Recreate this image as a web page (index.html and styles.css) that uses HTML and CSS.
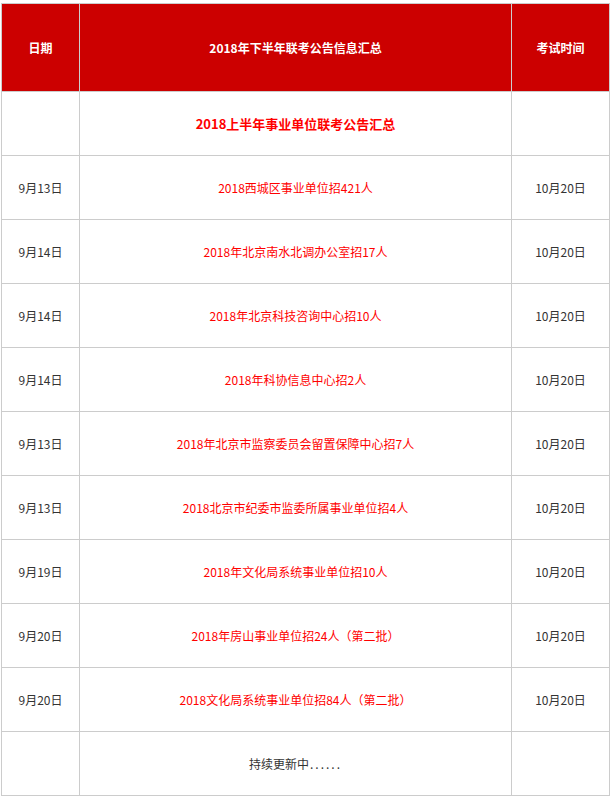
FILE: index.html
```html
<!DOCTYPE html>
<html lang="zh">
<head>
<meta charset="utf-8">
<link rel="stylesheet" href="styles.css">
</head>
<body>
<div class="wrap">
<table class="tbl">
  <colgroup>
    <col class="c1"><col class="c2"><col class="c3">
  </colgroup>
  <thead>
    <tr class="head">
      <th>日期</th>
      <th>2018年下半年联考公告信息汇总</th>
      <th>考试时间</th>
    </tr>
  </thead>
  <tbody>
    <tr class="row">
      <td></td>
      <td class="sub">2018上半年事业单位联考公告汇总</td>
      <td></td>
    </tr>
    <tr class="row"><td>9月13日</td><td class="link">2018西城区事业单位招421人</td><td>10月20日</td></tr>
    <tr class="row"><td>9月14日</td><td class="link">2018年北京南水北调办公室招17人</td><td>10月20日</td></tr>
    <tr class="row"><td>9月14日</td><td class="link">2018年北京科技咨询中心招10人</td><td>10月20日</td></tr>
    <tr class="row"><td>9月14日</td><td class="link">2018年科协信息中心招2人</td><td>10月20日</td></tr>
    <tr class="row"><td>9月13日</td><td class="link">2018年北京市监察委员会留置保障中心招7人</td><td>10月20日</td></tr>
    <tr class="row"><td>9月13日</td><td class="link">2018北京市纪委市监委所属事业单位招4人</td><td>10月20日</td></tr>
    <tr class="row"><td>9月19日</td><td class="link">2018年文化局系统事业单位招10人</td><td>10月20日</td></tr>
    <tr class="row"><td>9月20日</td><td class="link">2018年房山事业单位招24人（第二批）</td><td>10月20日</td></tr>
    <tr class="row"><td>9月20日</td><td class="link">2018文化局系统事业单位招84人（第二批）</td><td>10月20日</td></tr>
    <tr class="row"><td></td><td>持续更新中<span class="dots">......</span></td><td></td></tr>
  </tbody>
</table>
</div>
</body>
</html>
```

FILE: styles.css
```css
html, body {
  margin: 0;
  padding: 0;
  background: #ffffff;
}
.wrap {
  padding: 3px 0 0 1px;
}
.tbl {
  width: 608px;
  border-collapse: collapse;
  table-layout: fixed;
  font-family: "Noto Sans CJK SC", "Liberation Sans", sans-serif;
  font-size: 12px;
  color: #333333;
}
.c1 { width: 78px; }
.c2 { width: 432px; }
.c3 { width: 98px; }
.tbl th, .tbl td {
  border: 1px solid #cccccc;
  text-align: center;
  vertical-align: middle;
  padding: 0;
}
.head th {
  height: 87px;
  background: #cc0000;
  color: #ffffff;
  font-weight: bold;
  font-size: 12px;
}
.row td {
  height: 63px;
}
.sub {
  color: #ff0000;
  font-weight: bold;
  font-size: 13px;
}
.link {
  color: #ff0000;
}
.dots {
  letter-spacing: 2px;
  margin-left: 1px;
}
```
